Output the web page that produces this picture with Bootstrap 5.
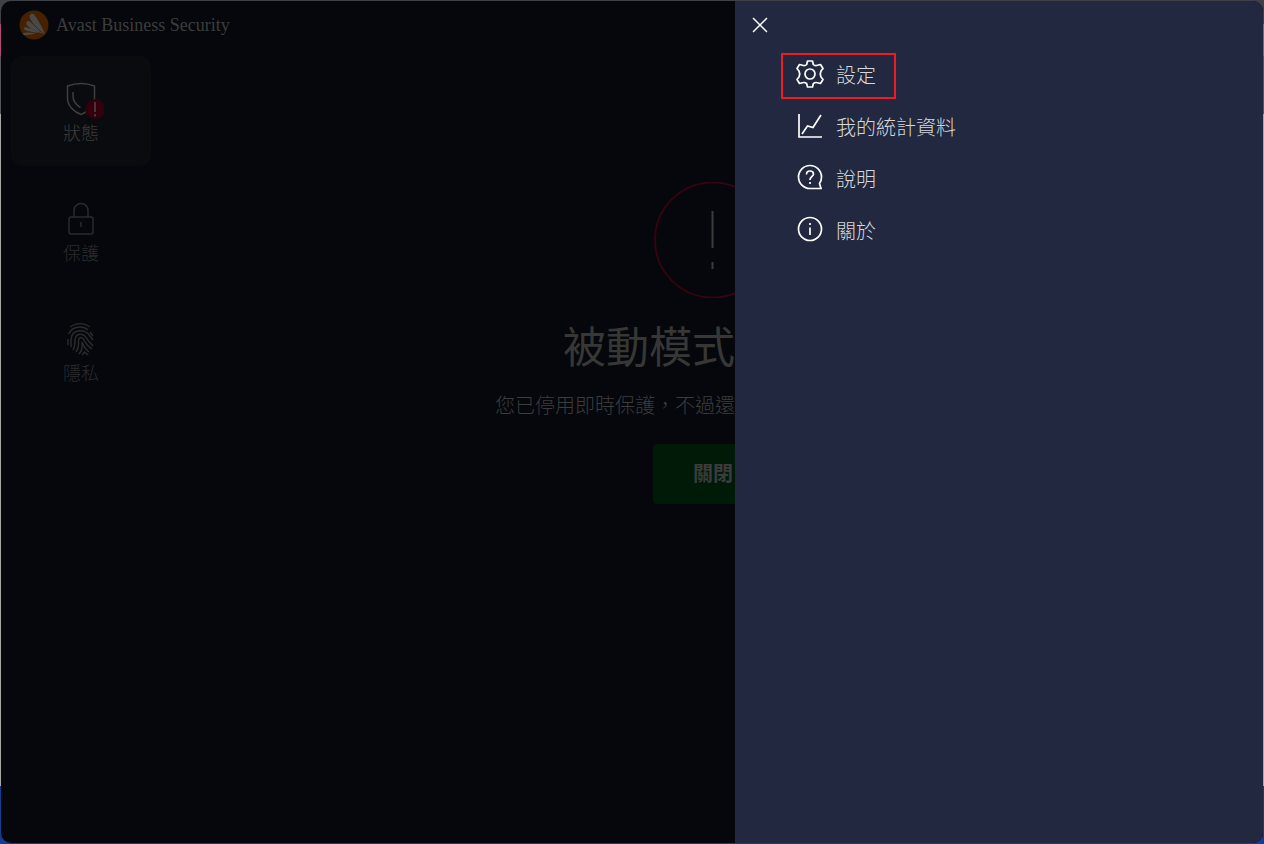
<!DOCTYPE html>
<html lang="zh-Hant">
<head>
<meta charset="utf-8">
<meta name="viewport" content="width=device-width, initial-scale=1">
<title>Avast Business Security</title>
<link href="https://cdn.jsdelivr.net/npm/bootstrap@5.3.0/dist/css/bootstrap.min.css" rel="stylesheet">
<style>
  body {
    font-family: "Noto Sans CJK TC", sans-serif;
    font-weight: 300;
    background: linear-gradient(#404048 0 24px, #b04a70 24px 56px, #55555c 56px 114px, #a8a8a8 114px 786px, #173c8c 786px);
  }
  .desktop { padding: 1px; }
  .app-window { background: #05070c; border-radius: 10px; color: #3c3c3c; }
  .brand { font-family: "Liberation Serif", "Noto Sans CJK TC", serif; font-size: 18px; line-height: 30px; padding: 9px 0 0 18px; gap: 7px; }
  .side-nav { width: 160px; padding: 16px 10px; gap: 10px; }
  .side-link { height: 110px; border-radius: 10px; color: #2c2d2e; font-size: 18px; line-height: 24px; text-decoration: none; padding-top: 23px; gap: 1px; }
  .side-link.active { background: #0a0b0f; color: #3c3c3c; }
  .stage { padding-top: 142px; }
  .alert-ring { width: 81px; height: 116px; }
  .stage h1 { font-size: 43px; line-height: 60px; margin: 16px 0 0; font-weight: 400; color: #373736; }
  .stage p { font-size: 20px; line-height: 30px; margin: 16px 0 24px; }
  .close-mode { width: 82px; height: 60px; background: #001a08; border-radius: 4px 0 0 4px; border: 0; color: #3c3c3c; font-size: 20px; font-weight: 700; padding: 0 2px 2px; text-align: right; }
  .drawer { width: 33rem; max-width: 80%; background: #21283f; border-radius: 0 10px 10px 0; padding: 14px 16px; }
  .btn-dismiss { background: none; border: 0; padding: 0; width: 20px; height: 20px; }
  .menu-items { margin: 18px 0 0 30px; gap: 6px; }
  .menu-link { color: #d6d8dd; font-size: 20px; line-height: 30px; height: 46px; padding: 0 18px 2px 12px; gap: 11px; border: 2px solid transparent; text-decoration: none; }
  .menu-link.marked { border-color: #ed1c24; }
</style>
</head>
<body>
<div class="desktop vh-100">
  <div class="app-window d-flex h-100 overflow-hidden">
    <div class="d-flex flex-column flex-grow-1">
      <header class="brand d-flex align-items-center">
        <svg width="30" height="30" viewBox="0 0 30 30" aria-hidden="true">
          <circle cx="15" cy="15" r="14.500" fill="#452100"/>
          <path d="M26 24.500C20 20 13.500 14 10.800 8C9.500 4.500 13.500 2 16 5.500C18.500 9.500 24 18 26 24.500Z" fill="#494949"/>
          <path d="M24 24C17 21.500 11 18.500 7.800 15C6 12 9 9.800 11.500 12C15 15.500 20 20.500 24 24Z" fill="#494949"/>
          <path d="M20 22.800C14 22.500 9 21.300 6 20C3.800 18.700 5 16.800 7.200 17.300C12 18.500 16 20.500 20 22.800ZM17 23.500C12 22.500 7 22 3.500 23.500L5 25C8 25 12 24.500 17 23.500Z" fill="#494949"/>
        </svg>
        <span>Avast Business Security</span>
      </header>
      <div class="d-flex flex-grow-1">
        <nav class="side-nav d-flex flex-column flex-shrink-0">
          <a href="#" class="side-link active d-flex flex-column align-items-center">
            <svg width="46" height="40" viewBox="0 0 46 40" fill="none" stroke="#3f3f40" stroke-width="1.500" aria-hidden="true">
              <path d="M9.500 7Q23 2 36.500 7V19C36.500 27 30 33 23 35.500C16 33 9.500 27 9.500 19Z"/>
              <path d="M15 13V17Q15 24 22.500 28.500"/>
              <circle cx="37" cy="30" r="10" fill="#32000c" stroke="none"/>
              <path d="M37 23V33M37 35V37.500" stroke="#48343a" stroke-width="2"/>
            </svg>
            <span>狀態</span>
          </a>
          <a href="#" class="side-link d-flex flex-column align-items-center">
            <svg width="36" height="40" viewBox="0 0 36 40" fill="none" stroke="#2a2b2d" stroke-width="1.500" aria-hidden="true">
              <rect x="6" y="18" width="24" height="17" rx="2"/>
              <path d="M11 18V11.500a7 7 0 0 1 14 0V18M18 23V28"/>
            </svg>
            <span>保護</span>
          </a>
          <a href="#" class="side-link d-flex flex-column align-items-center">
            <svg width="36" height="40" viewBox="0 0 36 40" fill="none" stroke="#2a2b2d" stroke-width="1.500" aria-hidden="true">
              <path d="M7 8Q17 1 27 8M5.500 15Q9 8 17 8Q22 8 25 11M27 13L30 17M5 20V26M8 28V20C9 10 22 9 27 17L30 21M10 31Q12 28 12 21C13 13 21 14 24 20L30 27M13 33Q16 29 15.500 22C16 17 20 18 21.500 22Q24 27 29 30M16 35Q20 31 19 23Q21 29 26 33M19 36L21.500 33L25 36"/>
            </svg>
            <span>隱私</span>
          </a>
        </nav>
        <main class="stage d-flex flex-column align-items-end flex-grow-1">
          <svg class="alert-ring" viewBox="0 0 81 116" fill="none" aria-hidden="true">
            <circle cx="58.500" cy="58" r="57.500" stroke="#35040e" stroke-width="2"/>
            <path d="M58.500 29V66M58.500 80V87" stroke="#3c3c3c" stroke-width="2"/>
          </svg>
          <h1>被動模式</h1>
          <p>您已停用即時保護，不過還</p>
          <button type="button" class="close-mode">關閉</button>
        </main>
      </div>
    </div>
    <aside class="drawer flex-shrink-0">
      <button type="button" class="btn-dismiss d-flex" aria-label="關閉">
        <svg width="20" height="20" viewBox="0 0 20 20" stroke="#fff" stroke-width="1.500"><path d="M2 3L16 17M16 3L2 17"/></svg>
      </button>
      <nav class="menu-items d-flex flex-column align-items-start">
        <a href="#" class="menu-link marked d-flex align-items-center">
          <svg width="30" height="30" viewBox="0 0 30 30" fill="none" stroke="#fff" stroke-width="1.700" aria-hidden="true">
            <circle cx="15" cy="14" r="5"/>
            <path d="M12.500 1H17.500L18.300 4.500Q20 6.200 22.500 5.300L25.500 4.500L28 8.500L26 11Q24.500 14 26 17L28 19.500L25.500 23.500L22.500 22.700Q20 22 18.300 23.700L17.500 27H12.500L11.700 23.700Q10 22 7.500 22.700L4.500 23.500L2 19.500L4 17Q5.500 14 4 11L2 8.500L4.500 4.500L7.500 5.300Q10 6.200 11.700 4.500Z" stroke-linejoin="round"/>
          </svg>
          <span>設定</span>
        </a>
        <a href="#" class="menu-link d-flex align-items-center">
          <svg width="30" height="30" viewBox="0 0 30 30" fill="none" stroke="#fff" stroke-width="1.700" aria-hidden="true"><path d="M4 2V25H27M7 22L12.500 14L18 15.500L26 3"/></svg>
          <span>我的統計資料</span>
        </a>
        <a href="#" class="menu-link d-flex align-items-center">
          <svg width="30" height="30" viewBox="0 0 30 30" fill="none" stroke="#fff" stroke-width="1.700" aria-hidden="true"><path d="M26 24.500H15A11.500 11.500 0 1 1 26.500 13Q26.500 17 24.500 19.500ZM11.500 10.500Q11.500 7 15 7T18.500 10C18.500 12.500 15 12.500 15 16M15 18V20"/></svg>
          <span>說明</span>
        </a>
        <a href="#" class="menu-link d-flex align-items-center">
          <svg width="30" height="30" viewBox="0 0 30 30" fill="none" stroke="#fff" stroke-width="1.700" aria-hidden="true"><circle cx="15" cy="13" r="11.500"/><path d="M15 7V9M15 11.500V19"/></svg>
          <span>關於</span>
        </a>
      </nav>
    </aside>
  </div>
</div>
<script src="https://cdn.jsdelivr.net/npm/bootstrap@5.3.0/dist/js/bootstrap.bundle.min.js"></script>
</body>
</html>
